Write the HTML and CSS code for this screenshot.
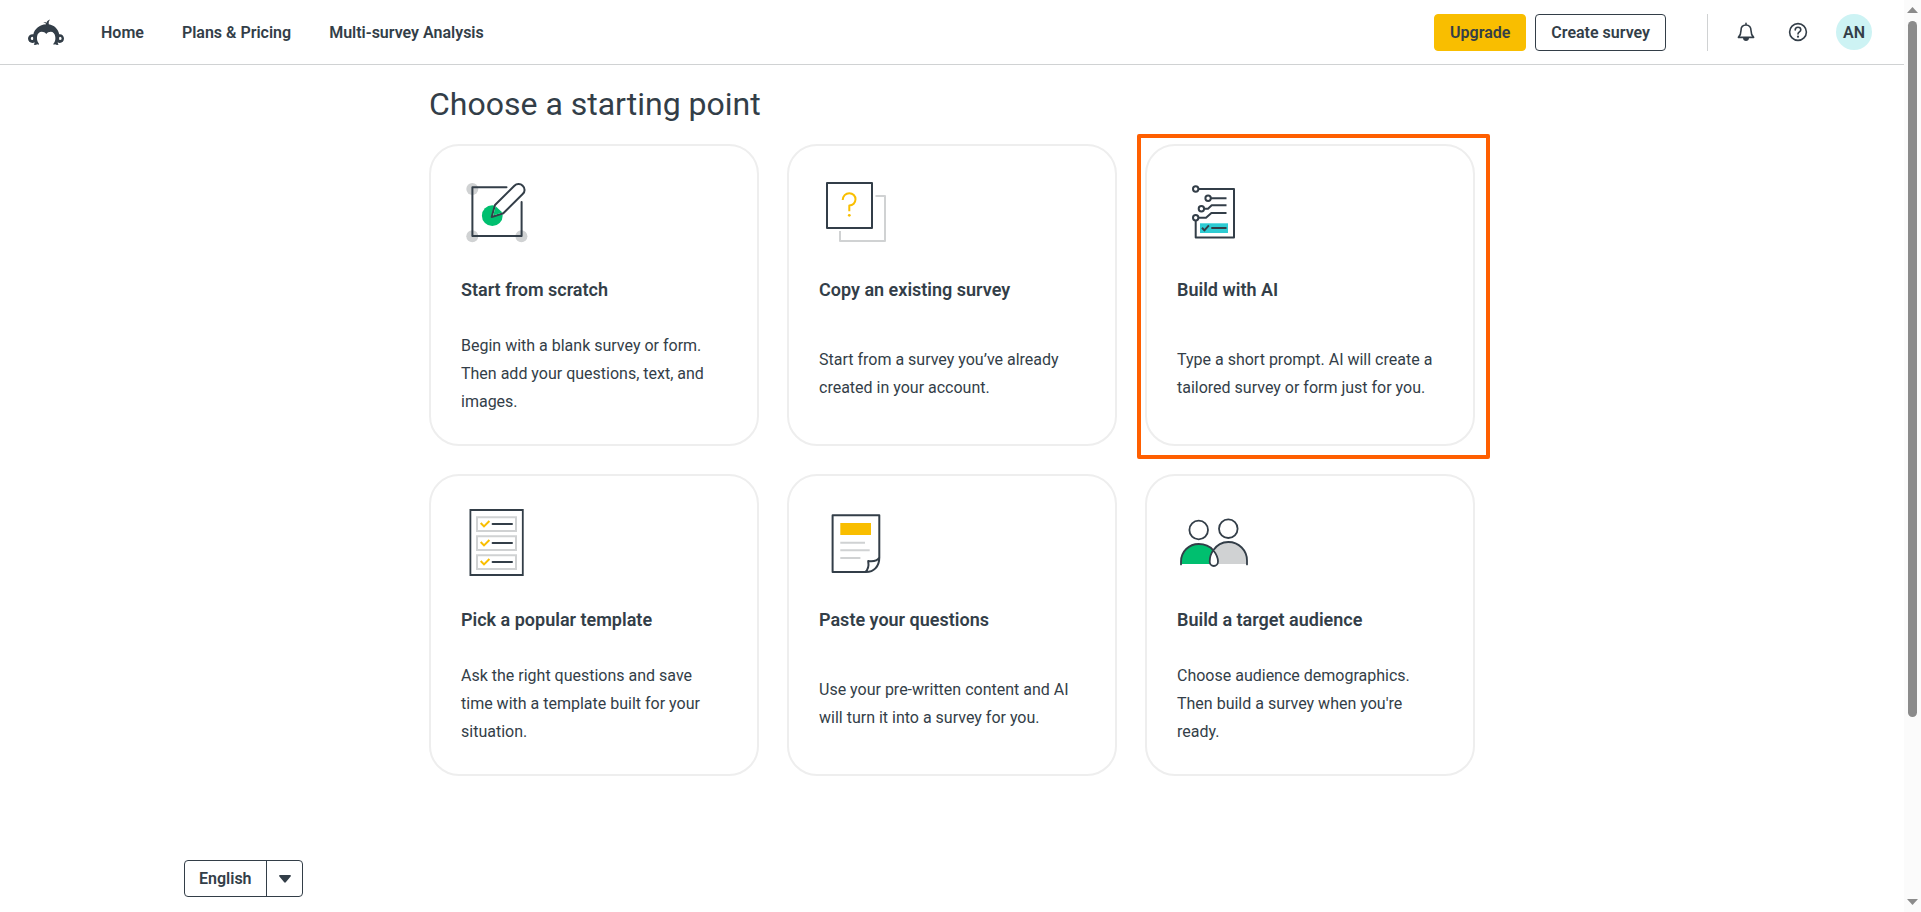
FILE: index.html
```html
<!DOCTYPE html>
<html lang="en">
<head>
  <meta charset="UTF-8">
  <meta name="viewport" content="width=device-width, initial-scale=1.0">
  <title>Create a survey</title>
  <link rel="stylesheet" href="styles.css">
</head>
<body>
  <div class="page">
    <header class="header">
      <a class="logo" href="#" aria-label="Homepage">
        <svg width="36" height="27" viewBox="0 0 36 27">
          <path fill="#333e48" fill-rule="evenodd" d="M18.2 5.2C17.4 4 16.2 3.3 15 3.1C16.5 2.7 17.8 3 18.6 3.8C18.9 2.2 20.2 1 22.2.6C20.9 1.8 20.5 3.3 20.8 5.2C26 5.9 30.2 10 31.2 15.2C33.9 14.8 36 16.9 36 19.5C36 22 34.2 23.9 31.8 23.9C30.9 23.9 30.2 23.7 29.7 23.3C29.7 24.2 30 25 30.6 25.8C29 26.1 27.9 25.8 27.2 25.2L25.5 25.7C25.3 24.7 25.6 24 26.3 23.4C27.3 21.8 27.5 20 27.3 17.9C27 14.8 25.2 12.8 22.7 12.8C20.9 12.8 19.3 13.6 18.3 15C17.2 13.6 15.6 12.8 13.8 12.8C11.3 12.8 9.2 14.8 9 17.9C8.8 20 9.2 21.8 10.1 23.4C10.8 24 11.1 24.7 10.9 25.7L9.2 25.2C8.5 25.8 7.2 26.1 5.8 25.8C6.3 25 6.6 24.2 6.6 23.3C6 23.7 5.3 23.9 4.4 23.9C2 23.9 0 22 0 19.5C0 16.9 2.3 14.8 5.4 15.2C6.4 10 11.4 5.5 18.2 5.2ZM4.4 17.8A1.6 1.6 0 1 0 4.4 21C5 20.8 5.2 20.4 5.2 19.4C5.2 18.4 5 18 4.4 17.8ZM32 17.8C31.4 18 31.1 18.4 31.1 19.4C31.1 20.4 31.4 20.8 32 21A1.6 1.6 0 1 0 32 17.8Z"/>
        </svg>
      </a>
      <nav class="nav">
        <a href="#">Home</a>
        <a href="#">Plans &amp; Pricing</a>
        <a href="#">Multi-survey Analysis</a>
      </nav>
      <div class="actions">
        <button class="btn btn-upgrade" type="button">Upgrade</button>
        <button class="btn" type="button">Create survey</button>
      </div>
      <div class="account">
        <div class="icons">
          <button class="icon-btn" type="button" aria-label="Notifications">
            <svg width="20" height="20" viewBox="0 0 20 20" fill="none" stroke="#333e48" stroke-width="1.6" stroke-linejoin="round" stroke-linecap="round">
              <path d="M10 1.4V3M10 3C6.8 3 5 5.4 5 8.4C5 12 4 13.6 2.4 15.4H17.6C16 13.6 15 12 15 8.4C15 5.4 13.2 3 10 3Z"/>
              <path fill="#333e48" stroke="none" d="M7 16H13C13 17.8 11.7 19 10 19C8.3 19 7 17.8 7 16Z"/>
            </svg>
          </button>
          <button class="icon-btn" type="button" aria-label="Help">
            <svg width="20" height="20" viewBox="0 0 20 20" fill="none" stroke="#333e48" stroke-width="1.6" stroke-linecap="round">
              <circle cx="10" cy="10" r="8.4"/>
              <path d="M7.2 7.9C7.2 6.2 8.4 5.2 10 5.2C11.6 5.2 12.8 6.2 12.8 7.8C12.8 9.9 10 9.8 10 12"/>
              <circle cx="10" cy="14.7" r="1.1" fill="#333e48" stroke="none"/>
            </svg>
          </button>
        </div>
        <button class="avatar" type="button">AN</button>
      </div>
    </header>

    <main class="main">
      <h1>Choose a starting point</h1>
      <div class="cards">
        <a class="card" href="#">
          <svg class="card-icon" viewBox="0 0 72 72" fill="none" stroke="#333e48" stroke-width="2" stroke-linecap="round" stroke-linejoin="round">
            <g fill="#d0d2d3" stroke="none">
              <circle cx="11.3" cy="13" r="6"/>
              <circle cx="11.3" cy="60.3" r="6"/>
              <circle cx="60.4" cy="60.3" r="6"/>
            </g>
            <circle cx="31.3" cy="39.7" r="10.4" fill="#00bf6f" stroke="none"/>
            <path d="M45.5 11.3H11.4V60H60.6V26"/>
            <path fill="#fff" d="M34 29L53.4 9.8C55.6 7.6 59.4 7.4 61.7 9.8C64.2 12.2 64.2 15.6 61.7 18L42.3 37.3L30.7 41Z"/>
            <path fill="#00bf6f" stroke="none" d="M34.6 30.2L41.4 36.6L32.2 39.6Z"/>
          </svg>
          <h2>Start from scratch</h2>
          <p>Begin with a blank survey or form. Then add your questions, text, and images.</p>
        </a>

        <a class="card" href="#">
          <svg class="card-icon" viewBox="0 0 72 72" fill="none" stroke-width="2" stroke-linejoin="round">
            <path stroke="#333e48" d="M8 7H53V52H8Z"/>
            <path stroke="#d0d2d3" d="M56.5 20H66V65H21V55"/>
            <path stroke="#f9be00" d="M23.7 24C23.7 20 26.7 17.2 30.3 17.2C34 17.2 36.5 20 36.5 23.3C36.5 26.8 33.8 29.4 30.3 29.4V35.3"/>
            <circle cx="30.3" cy="39.3" r="1.4" fill="#f9be00"/>
          </svg>
          <h2>Copy an existing survey</h2>
          <p>Start from a survey you’ve already created in your account.</p>
        </a>

        <a class="card card-highlight" href="#">
          <svg class="card-icon" viewBox="0 0 72 72" fill="none" stroke="#333e48" stroke-width="2" stroke-linejoin="round">
            <path fill="#2dccd3" stroke="none" d="M23 47.3H51V57H23Z"/>
            <path d="M21.5 13H57V61.6H18.7V44.6"/>
            <path d="M34 22.3H49.5M27.3 32.7H31L34.7 29.3H49.5M21.6 41.7H29L34.4 37H49.5"/>
            <circle cx="18.7" cy="13" r="2.7"/>
            <circle cx="31.1" cy="22.3" r="2.7"/>
            <circle cx="24.4" cy="32.7" r="2.7"/>
            <circle cx="18.7" cy="41.7" r="2.7"/>
            <path d="M25 51.8L27.4 54.4L31.9 49.4M34.3 52H49.5"/>
          </svg>
          <h2>Build with AI</h2>
          <p>Type a short prompt. AI will create a tailored survey or form just for you.</p>
        </a>

        <a class="card" href="#">
          <svg class="card-icon" viewBox="0 0 72 72" fill="none" stroke-width="2">
            <path stroke="#333e48" stroke-width="1.8" d="M9.4 4H61.8V69H9.4Z"/>
            <path stroke="#d0d2d3" d="M16 11.3H55V25H16ZM16 30.3H55V44H16ZM16 49.3H55V63H16Z"/>
            <path stroke="#f9be00" d="M19.7 17L23 20.4L28.4 15M19.7 36L23 39.4L28.4 34M19.7 55L23 58.4L28.4 53"/>
            <path stroke="#333e48" stroke-linecap="round" d="M31.6 18H51M31.6 37H51M31.6 56H51"/>
          </svg>
          <h2>Pick a popular template</h2>
          <p>Ask the right questions and save time with a template built for your situation.</p>
        </a>

        <a class="card" href="#">
          <svg class="card-icon" viewBox="0 0 72 72" fill="none" stroke="#333e48" stroke-width="2" stroke-linejoin="round">
            <path fill="#f9be00" stroke="none" d="M21.3 17H52V29H21.3Z"/>
            <path stroke="#d0d2d3" d="M21.3 36.7H46M21.3 44.3H50.7M21.3 52H41.4"/>
            <path d="M60.3 52V9.2H13.6V66H47C55 66 60.3 60.5 60.3 51.5C58.5 54.6 54 55.6 49.2 55C50 60 48.8 64.2 46 66"/>
          </svg>
          <h2>Paste your questions</h2>
          <p>Use your pre-written content and AI will turn it into a survey for you.</p>
        </a>

        <a class="card" href="#">
          <svg class="card-icon" viewBox="0 0 72 72" fill="none" stroke="#333e48" stroke-width="1.8">
            <path fill="#00bf6f" stroke="none" d="M4 58V55.5C4 45.5 12 38 21.7 38C29 38 33.5 41 36.3 44.3C34.3 47 32.7 51 32.7 55.5L33.3 58Z"/>
            <path fill="#d0d2d3" stroke="none" d="M70 58V54.5C70 44.5 62 36 51.3 36C45 36 39.5 39.5 36.3 44.3C38.8 47.5 41 52 41 55.5L40.4 58Z"/>
            <path stroke-linecap="round" d="M4 58.4V55.5C4 45.5 12 38 21.7 38C29 38 33.5 41 36.3 44.3C38.8 47.5 41 52 41 55.5C41 58 39 60 36.8 60C34.5 60 32.7 58 32.7 55.5C32.7 51 34.3 47 36.3 44.3C39.5 39.5 45 36 51.3 36C62 36 70 44.5 70 54.5V58.4"/>
            <circle cx="21.7" cy="24" r="9.3"/>
            <circle cx="51.3" cy="22.7" r="9.3"/>
          </svg>
          <h2>Build a target audience</h2>
          <p>Choose audience demographics. Then build a survey when you're ready.</p>
        </a>
      </div>
    </main>

    <footer class="footer">
      <div class="language">
        <select id="language" name="language" aria-label="Language">
          <option value="en" selected>English</option>
        </select>
        <span class="caret">
          <svg width="12" height="8" viewBox="0 0 12 8"><path fill="#333e48" d="M1 0H11C12 0 12.2.9 11.6 1.5L6.8 7.2C6.4 7.8 5.6 7.8 5.2 7.2L.4 1.5C-.2.9 0 0 1 0Z"/></svg>
        </span>
      </div>
    </footer>
  </div>

  <div class="scrollbar" aria-hidden="true">
    <svg width="11" height="6" viewBox="0 0 11 6"><path fill="#8b8b8b" d="M5.5 0L11 6H0Z"/></svg>
    <div class="scroll-track"><div class="scroll-thumb"></div></div>
    <svg width="11" height="6" viewBox="0 0 11 6"><path fill="#8b8b8b" d="M5.5 6L0 0H11Z"/></svg>
  </div>
</body>
</html>
```
FILE: styles.css
```css
* {
  box-sizing: border-box;
}
body {
  display: flex;
  height: 100vh;
  margin: 0;
  overflow: hidden;
  background: #fff;
  color: #333e48;
  font-family: Roboto, "Liberation Sans", sans-serif;
  font-size: 16px;
}
a {
  color: inherit;
  text-decoration: none;
}
button, select {
  font: inherit;
  color: inherit;
  cursor: pointer;
}
.page {
  flex: 1;
  min-width: 0;
}

/* header */
.header {
  display: flex;
  align-items: center;
  height: 65px;
  padding: 0 32px 0 28px;
  border-bottom: 1px solid #d0d2d3;
  font-weight: 600;
}
.logo {
  display: flex;
}
.nav {
  display: flex;
  gap: 38px;
  margin-left: 37px;
}
.actions {
  display: flex;
  gap: 9px;
  margin-left: auto;
}
.btn {
  height: 37px;
  padding: 0 15px;
  border: 1px solid #333e48;
  border-radius: 4px;
  background: #fff;
}
.btn-upgrade {
  border-color: #f9be00;
  background: #f9be00;
}
.account {
  display: flex;
  align-items: center;
  gap: 28px;
  height: 37px;
  margin-left: 41px;
  padding-left: 28px;
  border-left: 1px solid #d0d2d3;
}
.icons {
  display: flex;
  gap: 32px;
}
.icon-btn {
  display: flex;
  padding: 0;
  border: none;
  background: none;
}
.avatar {
  width: 36px;
  height: 36px;
  padding: 0;
  border: none;
  border-radius: 50%;
  background: #cdf3f4;
}

/* starting points */
.main {
  max-width: 1046px;
  margin: 0 auto;
  padding-top: 19px;
}
h1 {
  margin: 0 0 20px;
  font-size: 32px;
  line-height: 40px;
  font-weight: 400;
}
.cards {
  display: grid;
  grid-template-columns: repeat(3, 1fr);
  gap: 28px;
}
.card {
  position: relative;
  display: flex;
  flex-direction: column;
  gap: 30px;
  padding: 30px 30px 28px;
  border: 2px solid #eee;
  border-radius: 30px;
}
.card-icon {
  width: 72px;
  height: 72px;
}
.card h2 {
  margin: 0;
  font-size: 18px;
  line-height: 24px;
  font-weight: 600;
}
.card p {
  display: flex;
  align-items: center;
  min-height: 84px;
  margin: 0;
  line-height: 28px;
}
.card-highlight::after {
  content: "";
  position: absolute;
  top: -12px;
  right: -17px;
  bottom: -15px;
  left: -10px;
  border: 4px solid #ff5f00;
  border-radius: 2px;
}

/* footer */
.footer {
  max-width: 1536px;
  margin: 0 auto;
  padding-top: 84px;
}
.language {
  display: inline-grid;
  height: 37px;
}
.language select {
  grid-area: 1 / 1;
  padding: 0 50px 0 14px;
  border: 1px solid #333e48;
  border-radius: 4px;
  background: #fff;
  font-weight: 600;
  appearance: none;
}
.caret {
  grid-area: 1 / 1;
  justify-self: end;
  display: flex;
  align-items: center;
  justify-content: center;
  width: 37px;
  border-left: 1px solid #333e48;
  pointer-events: none;
}

/* scrollbar */
.scrollbar {
  display: flex;
  flex-direction: column;
  align-items: center;
  gap: 8px;
  width: 17px;
  padding: 7px 0;
  background: #fbfbfb;
}
.scroll-track {
  flex: 1;
}
.scroll-thumb {
  width: 9px;
  height: 80%;
  border-radius: 5px;
  background: #8b8b8b;
}
```
